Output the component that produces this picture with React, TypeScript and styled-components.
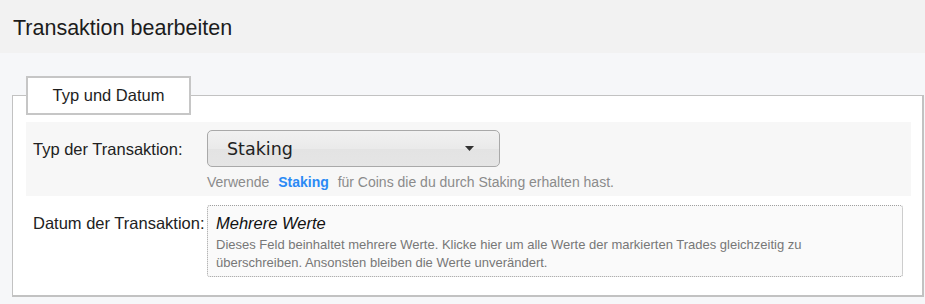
import React from "react";
import styled, { createGlobalStyle } from "styled-components";

const GlobalStyle = createGlobalStyle`
  html, body {
    margin: 0;
    padding: 0;
    background: #f6f7f9;
    font-family: "Liberation Sans", Arial, sans-serif;
    color: #222;
  }
  * { box-sizing: border-box; }
`;

const Page = styled.div`
  width: 925px;
  min-height: 304px;
  background: #f6f7f9;
`;

const Header = styled.header`
  height: 53px;
  background: #f2f2f2;
  padding: 17px 0 0 13px;
`;

const Title = styled.h1`
  margin: 0;
  font-size: 21.5px;
  line-height: 22px;
  font-weight: normal;
  color: #1c1c1c;
`;

const Content = styled.main`
  padding: 23px 1px 0 12px;
`;

const Panel = styled.fieldset`
  margin: 0;
  min-inline-size: 0;
  background: #ffffff;
  border: 1px solid #c2c2c2;
  border-right-width: 2px;
  border-bottom-width: 2px;
  padding: 7px 11px 18px 13px;
`;

const Legend = styled.legend`
  width: 165px;
  height: 39px;
  padding: 0;
  margin: 0;
  background: #ffffff;
  border: 2px solid #c6c6c6;
  display: flex;
  align-items: center;
  justify-content: center;
  font-size: 16.5px;
  color: #1e1e1e;
`;

const Row = styled.div<{ $shaded?: boolean; $padTop: number; $padBottom: number }>`
  display: grid;
  grid-template-columns: 174px 1fr;
  align-items: start;
  background: ${(p) => (p.$shaded ? "#f7f7f7" : "transparent")};
  padding: ${(p) => `${p.$padTop}px 8px ${p.$padBottom}px 7px`};
`;

const Label = styled.label<{ $offset: number }>`
  font-size: 16.5px;
  line-height: 20px;
  color: #222;
  padding-top: ${(p) => p.$offset}px;
  white-space: nowrap;
`;

const FieldCol = styled.div`
  display: flex;
  flex-direction: column;
`;

const SelectBox = styled.div`
  width: 293px;
  height: 37px;
  border: 1px solid #a9a9a9;
  border-radius: 5px;
  background: linear-gradient(
    to bottom,
    #f1f1f1 0%,
    #eaeaea 50%,
    #e3e3e3 52%,
    #e5e5e5 100%
  );
  display: flex;
  align-items: center;
  justify-content: space-between;
  padding: 0 25px 0 19px;
  font-family: "DejaVu Sans", Verdana, sans-serif;
  font-size: 17.5px;
  color: #222;
`;

const Caret = styled.svg`
  width: 9px;
  height: 5px;
  display: block;
`;

const Help = styled.div`
  margin-top: 6px;
  font-size: 14px;
  line-height: 18px;
  color: #8b8b8b;
  white-space: nowrap;
`;

const Accent = styled.strong`
  color: #2b8af5;
  font-weight: bold;
  margin: 0 5px;
`;

const MultiBox = styled.div`
  margin-top: 9px;
  border: 1px dotted #9f9f9f;
  border-radius: 3px;
  background: #fafafa;
  padding: 7px 8px 4px 8px;
  cursor: pointer;
`;

const MultiTitle = styled.div`
  font-size: 16.5px;
  line-height: 20px;
  font-style: italic;
  color: #111;
  margin-bottom: 3px;
`;

const MultiText = styled.div`
  font-size: 13px;
  line-height: 18px;
  color: #777;
  padding-right: 80px;
`;

export default function App() {
  return (
    <Page>
      <GlobalStyle />
      <Header>
        <Title>Transaktion bearbeiten</Title>
      </Header>
      <Content>
        <Panel>
          <Legend>Typ und Datum</Legend>
          <Row $shaded $padTop={8} $padBottom={5}>
            <Label $offset={9}>Typ der Transaktion:</Label>
            <FieldCol>
              <SelectBox>
                <span>Staking</span>
                <Caret viewBox="0 0 9 5">
                  <polygon points="0,0 9,0 4.5,5" fill="#333" />
                </Caret>
              </SelectBox>
              <Help>
                Verwende <Accent>Staking</Accent> für Coins die du durch Staking erhalten hast.
              </Help>
            </FieldCol>
          </Row>
          <Row $padTop={0} $padBottom={0}>
            <Label $offset={17}>Datum der Transaktion:</Label>
            <MultiBox>
              <MultiTitle>Mehrere Werte</MultiTitle>
              <MultiText>
                Dieses Feld beinhaltet mehrere Werte. Klicke hier um alle Werte der markierten Trades
                gleichzeitig zu überschreiben. Ansonsten bleiben die Werte unverändert.
              </MultiText>
            </MultiBox>
          </Row>
        </Panel>
      </Content>
    </Page>
  );
}
